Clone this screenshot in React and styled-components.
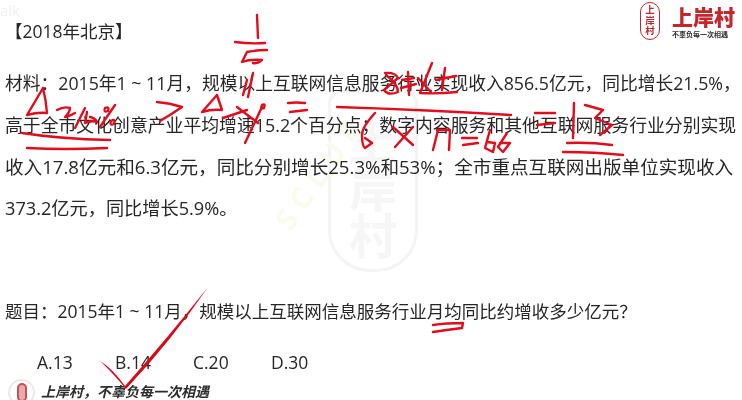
import React from 'react';
import styled, { createGlobalStyle } from 'styled-components';

const GlobalStyle = createGlobalStyle`
  html, body {
    margin: 0;
    background: white;
  }
`;

const Slide = styled.div`
  position: relative;
  width: 742px;
  height: 400px;
  overflow: hidden;
  background: white;
  color: rgb(38,38,38);
  font-family: "Open Sans", "Noto Sans CJK SC", sans-serif;
  font-size: 17.5px;
  filter: blur(0.35px);
`;

const Content = styled.div`
  position: relative;
  display: flex;
  flex-direction: column;
  height: 100%;
  box-sizing: border-box;
  padding-left: 5px;

  & > * {
    flex: none;
  }
`;

const Header = styled.div`
  display: flex;
  justify-content: space-between;
  align-items: flex-start;
  height: 63px;
  padding-right: 7px;
`;

const Source = styled.div`
  margin-top: 18px;
  line-height: 26px;
`;

const Brand = styled.div`
  display: flex;
  align-items: center;
  gap: 12px;
  margin-top: 2px;
`;

const Seal = styled.div`
  display: flex;
  flex-direction: column;
  align-items: center;
  justify-content: center;
  width: 20px;
  height: 38px;
  box-sizing: border-box;
  border: 1.5px solid rgb(190,40,45);
  border-radius: 10px;
  color: rgb(190,40,45);
  font-size: 9.5px;
  line-height: 10.5px;
  font-weight: 700;
`;

const BrandText = styled.div`
  display: flex;
  flex-direction: column;
  margin-top: 2px;
`;

const BrandName = styled.div`
  color: rgb(196,38,44);
  font-size: 21px;
  line-height: 25px;
  font-weight: 900;
`;

const Slogan = styled.div`
  color: rgb(50,50,50);
  font-size: 7px;
  line-height: 9px;
  font-weight: 700;
  white-space: nowrap;
`;

const Material = styled.div`
  display: flex;
  flex-direction: column;
`;

const Line = styled.div`
  font-size: ${(props) => props.$size}px;
  line-height: 41.7px;
  white-space: nowrap;
`;

const Question = styled.div`
  margin-top: 69px;
  line-height: 24px;
  white-space: nowrap;
`;

const Options = styled.div`
  display: grid;
  grid-template-columns: repeat(4, 78px);
  margin: 27px 0 0 32px;
  line-height: 24px;
`;

const Footer = styled.div`
  display: flex;
  align-items: center;
  gap: 6px;
  margin: 5px 0 0 3px;
`;

const Badge = styled.div`
  display: flex;
  align-items: center;
  justify-content: center;
  width: 27px;
  height: 27px;
  box-sizing: border-box;
  flex: none;
  border: 2px solid rgb(236,232,232);
  border-radius: 50%;
`;

const BadgeSeal = styled.div`
  width: 10px;
  height: 19px;
  box-sizing: border-box;
  border: 2px solid rgb(200,80,85);
  border-radius: 5px;
  background: rgb(232,170,172);
`;

const Motto = styled.div`
  color: rgb(45,45,45);
  font-size: 14px;
  font-weight: 700;
  font-style: italic;
  line-height: 18px;
`;

const Ghost = styled.div`
  position: absolute;
  color: rgb(240,240,240);
  font-size: 15px;
  line-height: 20px;
  left: 0;
  top: 0;
`;

const Watermark = styled.div`
  position: absolute;
  left: 328px;
  top: 90px;
  width: 90px;
  height: 182px;
  box-sizing: border-box;
  border: 3px solid rgb(245,244,244);
  border-radius: 14px 14px 42px 42px;
  display: flex;
  flex-direction: column;
  align-items: center;
  justify-content: flex-end;
  padding-bottom: 10px;
  color: rgb(247,246,246);
  font-size: 48px;
  line-height: 47px;
  font-weight: 700;
`;

const GreenMark = styled.div`
  position: absolute;
  left: 225px;
  top: 150px;
  width: 190px;
  text-align: center;
  color: rgb(247,252,236);
  font-size: 30px;
  font-weight: 700;
  letter-spacing: 8px;
  transform: rotate(-55deg);
`;

const Ink = styled.svg`
  position: absolute;
  inset: 0;
  width: 742px;
  height: 400px;
  fill: none;
  stroke: rgb(226,12,28);
  stroke-width: 2.4;
  stroke-linecap: round;
  stroke-linejoin: round;
`;

const CheckMark = styled.path`
  fill: rgb(214,10,24);
  stroke: none;
`;

const strokes = [
  // 1/5 =
  'M257 15 L258 38',
  'M235 42 Q250 44 265 43',
  'M267 50 Q256 50 247 52 L242 62 Q250 59 262 60 Q258 64 253 63',
  'M253 73 L248 97',
  'M247 80 L243 95',
  // left delta 21.5%
  'M43 88 Q36 100 27 115 Q38 112 47 113 Q46 100 43 88',
  'M57 110 Q64 106 70 108 Q70 112 65 117 Q70 116 75 113',
  'M85 108 L75 128',
  'M87 112 L85 123 Q92 120 97 122 Q95 118 90 117',
  'M115 105 L100 127',
  'M105 108 Q110 106 108 111 Q103 113 105 108',
  'M111 121 Q116 118 114 124 Q109 126 111 121',
  'M22 133 Q60 139 110 140',
  'M27 148 Q65 150 107 148',
  // > and right delta
  'M157 102 Q170 103 182 107 Q172 114 160 121',
  'M217 95 L202 112 Q212 109 222 110 L217 95',
  'M223 118 L247 110',
  'M237 107 L258 123',
  'M262 105 Q266 103 264 108 Q260 109 262 105',
  'M262 107 L245 143',
  'M288 103 Q296 102 305 103',
  'M290 112 Q298 111 307 110',
  // numerator
  'M385 73 Q395 72 398 78 L384 90 Q388 96 398 92 Q398 84 386 75',
  'M402 80 L414 78',
  'M408 72 L409 95',
  'M401 88 L416 84',
  'M432 63 L420 93 Q438 94 457 92',
  'M418 78 L431 92',
  'M445 68 L442 90',
  'M436 80 L456 76',
  // fraction bar and denominator
  'M337 107 Q430 110 511 115',
  'M375 113 Q362 127 362 135 Q362 146 365 148 L372 143 L365 138',
  'M393 127 L413 145',
  'M413 127 L395 147',
  'M438 130 L433 150',
  'M437 130 L450 130 L449 150',
  'M462 138 L477 138',
  'M463 145 L478 143',
  'M490 130 L485 148 L493 152 L495 143 L487 142',
  'M507 133 L498 147 L503 152 L510 143 L500 143',
  // = 13
  'M535 113 L555 113',
  'M537 125 L555 123',
  'M574 103 L573 138',
  'M585 105 L603 110 L595 118 L612 125 L600 135',
  'M567 143 Q590 142 612 145',
  'M563 152 Q595 152 623 155',
  // double line under the key word
  'M433 325 Q446 323 463 323 L462 328 Q446 330 433 332',
];

const App = () => {
  return (
    <Slide>
      <GlobalStyle />
      <Ghost>alk</Ghost>
      <Watermark>
        <span>上</span>
        <span>岸</span>
        <span>村</span>
      </Watermark>
      <GreenMark>SCLUB</GreenMark>
      <Content>
        <Header>
          <Source>【2018年北京】</Source>
          <Brand>
            <Seal>
              <span>上</span>
              <span>岸</span>
              <span>村</span>
            </Seal>
            <BrandText>
              <BrandName>上岸村</BrandName>
              <Slogan>不辜负每一次相遇</Slogan>
            </BrandText>
          </Brand>
        </Header>
        <Material>
          <Line $size={17.75}>材料：2015年1 ~ 11月，规模以上互联网信息服务行业实现收入856.5亿元，同比增长21.5%，</Line>
          <Line $size={17.85}>高于全市文化创意产业平均增速15.2个百分点；数字内容服务和其他互联网服务行业分别实现</Line>
          <Line $size={18.6}>收入17.8亿元和6.3亿元，同比分别增长25.3%和53%；全市重点互联网出版单位实现收入</Line>
          <Line $size={18.2}>373.2亿元，同比增长5.9%。</Line>
        </Material>
        <Question>题目：2015年1 ~ 11月，规模以上互联网信息服务行业月均同比约增收多少亿元？</Question>
        <Options>
          <span>A.13</span>
          <span>B.14</span>
          <span>C.20</span>
          <span>D.30</span>
        </Options>
        <Footer>
          <Badge>
            <BadgeSeal />
          </Badge>
          <Motto>上岸村，不辜负每一次相遇</Motto>
        </Footer>
      </Content>
      <Ink viewBox="0 0 742 400">
        {strokes.map((d, i) => (
          <path key={i} d={d} />
        ))}
        <CheckMark d="M100 361 Q112 368 125 386 Q170 335 208 287 Q172 340 126 389 Q112 372 100 361 Z" />
      </Ink>
    </Slide>
  );
};

export default App;
